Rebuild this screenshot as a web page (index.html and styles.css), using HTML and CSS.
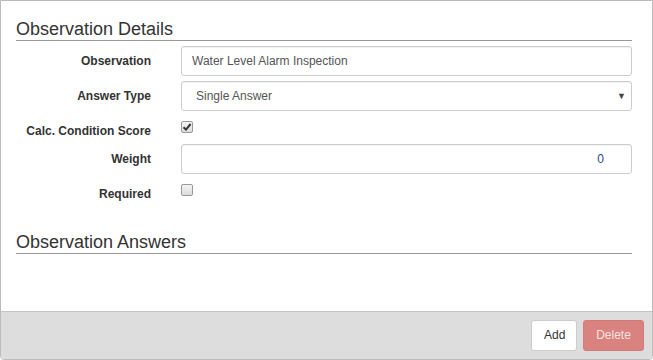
FILE: index.html
```html
<!DOCTYPE html>
<html lang="en">
<head>
    <meta charset="UTF-8">
    <title>Observation</title>
    <link rel="stylesheet" href="styles.css">
</head>
<body>
    <div class="dialog">
        <div class="dialog-body">
            <h2 class="section-title">Observation Details</h2>
            <div class="form-grid">
                <label class="form-label">Observation</label>
                <input class="form-input" type="text" value="Water Level Alarm Inspection">

                <label class="form-label">Answer Type</label>
                <div class="select-wrap">
                    <select class="form-input form-select">
                        <option>Single Answer</option>
                    </select>
                    <span class="select-arrow">&#9660;</span>
                </div>

                <label class="form-label check-label">Calc. Condition Score</label>
                <div class="check-cell">
                    <span class="checkbox">
                        <svg width="10" height="10" viewBox="0 0 10 10"><path d="M1.5 5.2 L4 7.6 L8.6 2" fill="none" stroke="#333" stroke-width="2"/></svg>
                    </span>
                </div>

                <label class="form-label">Weight</label>
                <input class="form-input number-input" type="text" value="0">

                <label class="form-label check-label">Required</label>
                <div class="check-cell">
                    <span class="checkbox"></span>
                </div>
            </div>

            <h2 class="section-title answers-title">Observation Answers</h2>
        </div>
        <div class="dialog-footer">
            <button class="btn btn-default">Add</button>
            <button class="btn btn-danger" disabled>Delete</button>
        </div>
    </div>
</body>
</html>
```

FILE: styles.css
```css
* {
    box-sizing: border-box;
}

body {
    margin: 0;
    font-family: "Liberation Sans", Arial, sans-serif;
    font-size: 12px;
    color: #333;
    background: #fff;
}

.dialog {
    width: 653px;
    height: 360px;
    border: 1px solid #bbb;
    border-radius: 0 0 4px 4px;
    display: flex;
    flex-direction: column;
    overflow: hidden;
}

.dialog-body {
    flex: 1;
    padding: 0 20px 0 15px;
}

.section-title {
    margin: 17px 0 0;
    font-size: 18px;
    font-weight: normal;
    line-height: 22px;
    color: #333;
    border-bottom: 1px solid #999;
}

.answers-title {
    margin-top: 29px;
}

.form-grid {
    display: grid;
    grid-template-columns: 135px 1fr;
    column-gap: 30px;
    row-gap: 5px;
    margin-top: 5px;
    align-items: center;
}

.form-label {
    text-align: right;
    font-weight: bold;
    color: #333;
}

.check-label {
    align-self: start;
    padding-top: 8px;
}

.form-input {
    height: 30px;
    width: 100%;
    border: 1px solid #ccc;
    border-radius: 3px;
    padding: 0 10px;
    font-family: "Liberation Sans", Arial, sans-serif;
    font-size: 12px;
    color: #555;
    background: #fff;
    box-shadow: inset 0 1px 1px rgba(0, 0, 0, 0.06);
}

.select-wrap {
    position: relative;
}

.form-select {
    appearance: none;
    -webkit-appearance: none;
    padding-left: 14px;
}

.select-arrow {
    position: absolute;
    right: 6px;
    top: 10px;
    font-size: 9px;
    color: #444;
    pointer-events: none;
}

.number-input {
    text-align: right;
    padding-right: 27px;
    color: #2a4a86;
}

.check-cell {
    height: 23px;
    display: flex;
    align-items: flex-start;
    padding-top: 5px;
}

.checkbox {
    width: 12px;
    height: 12px;
    border: 1px solid #999;
    border-radius: 2px;
    background: linear-gradient(#f4f4f4, #dcdcdc);
    display: flex;
    align-items: center;
    justify-content: center;
}

.dialog-footer {
    height: 48px;
    background: #ddd;
    border-top: 1px solid #c4c4c4;
    display: flex;
    justify-content: flex-end;
    align-items: center;
    gap: 6px;
    padding: 0 8px 1px 0;
}

.btn {
    height: 31px;
    border: 1px solid #ccc;
    border-radius: 3px;
    font-family: "Liberation Sans", Arial, sans-serif;
    font-size: 12px;
    padding: 0 12px;
}

.btn-default {
    background: #fff;
    color: #333;
    width: 46px;
}

.btn-danger {
    background: #d9827f;
    border-color: #d47a77;
    color: #f6e2e1;
    width: 61px;
}
```
